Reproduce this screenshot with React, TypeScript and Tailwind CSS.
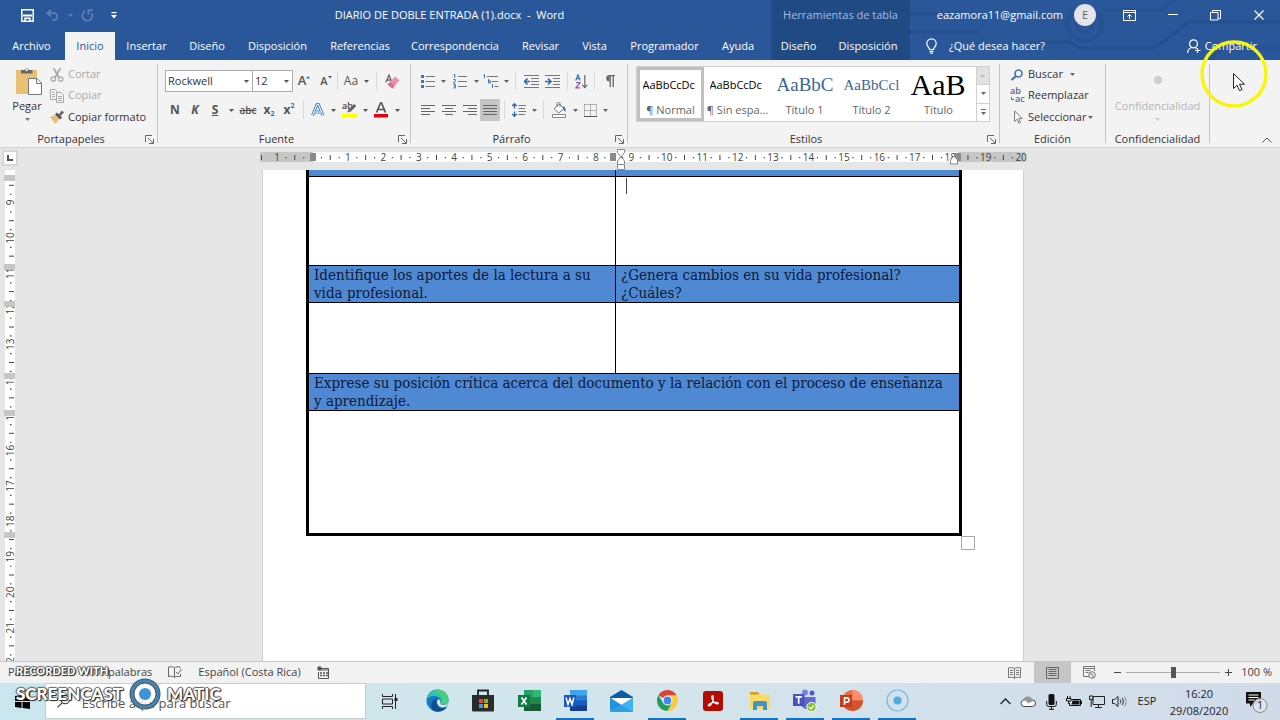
import React from "react";

interface Tab {
  label: string;
  width: string;
  active?: boolean;
}

const tabs: Tab[] = [
  { label: "Archivo", width: "w-[63px]" },
  { label: "Inicio", width: "w-[50px] ml-0.5", active: true },
  { label: "Insertar", width: "w-[63px]" },
  { label: "Diseño", width: "w-[58px]" },
  { label: "Disposición", width: "w-[83px]" },
  { label: "Referencias", width: "w-[82px]" },
  { label: "Correspondencia", width: "w-[108px]" },
  { label: "Revisar", width: "w-[63px]" },
  { label: "Vista", width: "w-[45px]" },
  { label: "Programador", width: "w-[95px]" },
  { label: "Ayuda", width: "w-[52px]" },
];

const UNIT = 35.43;

function Caret({ className = "w-2.5" }: { className?: string }) {
  return (
    <span className={`flex shrink-0 justify-center ${className}`}>
      <svg width="5" height="3" viewBox="0 0 5 3" fill="currentColor">
        <path d="M0 0h5L2.5 3z" />
      </svg>
    </span>
  );
}

function Tool({
  label,
  className = "w-5",
  children,
}: {
  label: string;
  className?: string;
  children: React.ReactNode;
}) {
  return (
    <button
      type="button"
      aria-label={label}
      className={`flex h-[22px] shrink-0 items-center justify-center ${className}`}
    >
      {children}
    </button>
  );
}

function Sep({ className = "mx-1" }: { className?: string }) {
  return <span className={`h-[18px] w-px shrink-0 bg-[#d8d8d8] ${className}`} />;
}

function Launcher() {
  return (
    <button type="button" aria-label="Más opciones" className="flex w-[15px] shrink-0 justify-center">
      <svg width="9" height="9" viewBox="0 0 9 9" fill="none" stroke="#666">
        <path d="M.5 7V.5H7M3 3l5 5M8.5 4v4.5H4" />
      </svg>
    </button>
  );
}

function Group({
  title,
  width,
  launcher = true,
  children,
}: {
  title: string;
  width: string;
  launcher?: boolean;
  children: React.ReactNode;
}) {
  return (
    <>
      <section className={`flex shrink-0 flex-col ${width}`}>
        <div className="h-[67px]">{children}</div>
        <div className="flex h-4 items-center">
          <h2 className="flex-1 text-center text-[11px] leading-4 text-[#333]">{title}</h2>
          {launcher && <Launcher />}
        </div>
      </section>
      <span className="h-[79px] w-px shrink-0 bg-[#c4c4c4]" />
    </>
  );
}

function Lines({ rows, width = 14 }: { rows: [number, number][]; width?: number }) {
  return (
    <svg
      width={width}
      height="12"
      viewBox={`0 0 ${width} 12`}
      stroke="#666"
      shapeRendering="crispEdges"
    >
      {rows.map(([x, w], i) => (
        <path key={i} d={`M${x} ${i * 3 + 1.5}h${w}`} />
      ))}
    </svg>
  );
}

function Header() {
  return (
    <header className="relative flex shrink-0 bg-[#2a579a] text-[11px] text-white">
      <svg
        className="pointer-events-none absolute top-0 right-0"
        width="400"
        height="60"
        viewBox="0 0 400 60"
        fill="none"
        stroke="#234e8e"
        strokeWidth="3"
      >
        <path d="M20 14h70M10 32h90M150 42h40l10 6h75l34-26h91" opacity=".8" />
        <circle cx="205" cy="24" r="17" opacity=".7" />
        <circle cx="205" cy="24" r="8" opacity=".5" />
        <path d="M222 10h60l12-10M330 60l14-12h56" opacity=".6" />
      </svg>

      <div className="flex w-[771px] shrink-0 flex-col">
        <div className="mb-0.5 flex h-[30px] items-center">
          <div className="flex items-center pl-4">
            <Tool label="Guardar" className="w-[22px]">
              <svg width="13" height="13" viewBox="0 0 13 13" fill="none" stroke="#fff" strokeWidth="1.5">
                <path d="M.8.8h11.4v11.4H.8z" />
                <path d="M2 6.5h9" strokeWidth="2" />
                <path d="M4 12V9.3h5V12" />
              </svg>
            </Tool>
            <Tool label="Deshacer" className="w-[28px]">
              <svg width="13" height="12" viewBox="0 0 13 12" fill="none" stroke="#5b80b8" strokeWidth="1.8">
                <path d="M5 .8L1.3 4.2 5 7.6M1.5 4.2H8a3.3 3.3 0 010 6.8H6.5" />
              </svg>
            </Tool>
            <Caret className="w-2 text-[#5b80b8]" />
            <Tool label="Rehacer" className="w-[26px]">
              <svg width="13" height="13" viewBox="0 0 13 13" fill="none" stroke="#5b80b8" strokeWidth="1.8">
                <path d="M4 2.3A5 5 0 1010.8 4.500M7.500 5.500V1.200h4.500" />
              </svg>
            </Tool>
            <Tool label="Personalizar barra" className="w-[28px]">
              <svg width="6" height="7" viewBox="0 0 6 7" fill="#fff">
                <path d="M.5 0h5v1.2h-5zM0 3h6L3 6.5z" />
              </svg>
            </Tool>
          </div>
          <h1 className="flex-1 text-center whitespace-pre">
            DIARIO DE DOBLE ENTRADA (1).docx  -  Word
          </h1>
        </div>
        <nav className="flex h-7">
          {tabs.map((tab) => (
            <button
              key={tab.label}
              type="button"
              className={`shrink-0 text-center whitespace-nowrap ${tab.width} ${
                tab.active ? "bg-[#f3f3f3] text-[#2a579a]" : ""
              }`}
            >
              {tab.label}
            </button>
          ))}
        </nav>
      </div>

      <div className="relative flex w-[139px] shrink-0 flex-col bg-[#204a84]">
        <p className="mb-0.5 flex h-[30px] items-center justify-center text-[#a3bce0]">
          Herramientas de tabla
        </p>
        <nav className="flex h-7">
          <button type="button" className="w-[55px]">Diseño</button>
          <button type="button" className="flex-1">Disposición</button>
        </nav>
      </div>

      <div className="relative flex flex-1 flex-col">
        <div className="mb-0.5 flex h-[30px] items-center justify-end">
          <span>eazamora11@gmail.com</span>
          <span className="mr-3 ml-[11px] flex size-[22px] items-center justify-center rounded-full bg-[#e4e4ea] text-[#666]">
            E
          </span>
          <Tool label="Opciones de cinta" className="w-[43px]">
            <svg width="13" height="11" viewBox="0 0 13 11" fill="none" stroke="#fff">
              <path d="M.5.5h12v10H.5zM.5 2.5h12M6.5 9V4.500M4.500 6.500l2-2 2 2" />
            </svg>
          </Tool>
          <Tool label="Minimizar" className="w-[43px]">
            <svg width="10" height="2" viewBox="0 0 10 2" stroke="#fff">
              <path d="M0 .5h10" />
            </svg>
          </Tool>
          <Tool label="Restaurar" className="w-[43px]">
            <svg width="11" height="11" viewBox="0 0 11 11" fill="none" stroke="#fff">
              <path d="M.5 2.5H8V10H.5zM2.5 2.5v-2h8v8h-2" />
            </svg>
          </Tool>
          <Tool label="Cerrar" className="w-[43px]">
            <svg width="10" height="10" viewBox="0 0 10 10" stroke="#fff" strokeWidth="1.2">
              <path d="M.5.5l9 9M9.5.5l-9 9" />
            </svg>
          </Tool>
        </div>
        <div className="flex h-7 items-center justify-between pr-[23px] pl-4">
          <button type="button" className="flex items-center gap-3">
            <svg width="11" height="16" viewBox="0 0 11 16" fill="none" stroke="#fff" strokeWidth="1.2">
              <path d="M3.5 11.5c0-2-2.7-3-2.7-6a4.7 4.7 0 019.4 0c0 3-2.700 4-2.700 6zM3.5 13.3h4M4 15.2h3" />
            </svg>
            ¿Qué desea hacer?
          </button>
          <button type="button" className="flex items-center gap-1">
            <svg width="14" height="15" viewBox="0 0 14 15" fill="none" stroke="#fff" strokeWidth="1.2">
              <circle cx="6.5" cy="4.8" r="4" />
              <path d="M.6 14c.2-3 2-5 4.4-5.5M8 8.5l1.5 1M10.5 9v5M8 11.5h5.5" />
            </svg>
            Compartir
          </button>
        </div>
      </div>
    </header>
  );
}

function Clipboard() {
  return (
    <Group title="Portapapeles" width="w-[157px]">
      <div className="flex text-[11px] text-[#333]">
        <button type="button" className="flex w-[50px] flex-col items-center pt-[3px] pl-1">
          <span className="pl-1">
            <svg width="28" height="29" viewBox="0 0 28 29">
              <path d="M1 3h21v24H1z" fill="#e9c174" />
              <path d="M6 6.5V3h3.500a2.500 2.500 0 014.500 0h3.500v3.500z" fill="#666" />
              <circle cx="11.7" cy="3" r="1.2" fill="#f3f3f3" />
              <path d="M13.5 11.5h8.500l4.500 4.500v11.500h-13z" fill="#fff" stroke="#777" />
              <path d="M21.5 11.5V16.500h5" fill="none" stroke="#777" />
            </svg>
          </span>
          <span className="mt-0.5 leading-4">Pegar</span>
          <Caret className="mt-1 w-2.5 text-[#777]" />
        </button>
        <div className="flex flex-col">
          <button type="button" disabled className="flex h-[21px] items-center gap-1 text-[#aaa]">
            <svg width="14" height="14" viewBox="0 0 14 14" fill="none" stroke="#aaa" strokeWidth="1.3">
              <path d="M3.5 0L9 9.500M10.500 0L5 9.500" strokeWidth="1.8" />
              <circle cx="3.3" cy="11" r="2.2" />
              <circle cx="10.7" cy="11" r="2.2" />
            </svg>
            Cortar
          </button>
          <button type="button" disabled className="flex h-[21px] items-center gap-1 text-[#aaa]">
            <svg width="14" height="14" viewBox="0 0 14 14" fill="#f3f3f3" stroke="#aaa">
              <path d="M.5.5H5l2.5 2.5v7.500h-7zM2 3.500h2M2 5.500h3M2 7.500h3" />
              <path d="M6.5 3.5H11L13.500 6v7.500h-7zM8 7.500h4M8 9.500h4M8 11.500h4" />
            </svg>
            Copiar
          </button>
          <button type="button" className="flex h-[22px] items-center gap-1">
            <svg width="14" height="14" viewBox="0 0 14 14">
              <path d="M0 7l5-2 4 4-3.5 5z" fill="#e9b970" />
              <path d="M5 4.500l2-2 5 5-2 2z" fill="#555" />
              <path d="M8.5 4.500L12 .5l2 2-3.800 3.800z" fill="#666" />
            </svg>
            Copiar formato
          </button>
        </div>
      </div>
    </Group>
  );
}

function Font() {
  return (
    <Group title="Fuente" width="w-[252px]">
      <div className="flex flex-col gap-[7px] pt-[6px] pl-[7px] text-[#555]">
        <div className="flex items-center">
          <label className="relative flex w-[88px] items-center">
            <select
              aria-label="Fuente"
              className="h-[22px] w-full appearance-none border border-[#ababab] bg-white pl-0.5 text-[11px] text-[#333]"
            >
              <option>Rockwell</option>
            </select>
            <span className="pointer-events-none absolute right-0.5">
              <Caret />
            </span>
          </label>
          <label className="relative -ml-px flex w-[41px] items-center">
            <select
              aria-label="Tamaño"
              className="h-[22px] w-full appearance-none border border-[#ababab] bg-white pl-0.5 text-[11px] text-[#333]"
            >
              <option>12</option>
            </select>
            <span className="pointer-events-none absolute right-0.5">
              <Caret />
            </span>
          </label>
          <Tool label="Aumentar fuente" className="w-[22px] text-[13px] font-semibold">
            A
            <svg width="4" height="10" viewBox="0 0 4 10" fill="#3a6ea8">
              <path d="M0 2.500h4L2 0z" />
            </svg>
          </Tool>
          <Tool label="Disminuir fuente" className="w-[22px] text-[11px] font-semibold">
            A
            <svg width="4" height="10" viewBox="0 0 4 10" fill="#555">
              <path d="M0 0h4L2 2.500z" />
            </svg>
          </Tool>
          <Sep className="mx-0" />
          <Tool label="Cambiar mayúsculas" className="w-[38px] text-xs">
            Aa
            <Caret className="ml-1 w-2" />
          </Tool>
          <Sep className="mx-0" />
          <Tool label="Borrar formato" className="w-[30px]">
            <svg width="15" height="15" viewBox="0 0 15 15">
              <path d="M.8 8.500L4 1l2.800 7M2 6h4" fill="none" stroke="#666" strokeWidth="1.3" />
              <path d="M2.500 10.500L10 2.500l4.500 3.700L7.500 14.500z" fill="#e793ab" />
              <path d="M2.500 10.500L5 8l4.700 4-2.200 2.500z" fill="#d96f90" />
            </svg>
          </Tool>
        </div>
        <div className="flex items-center">
          <Tool label="Negrita" className="w-5 text-xs font-bold">N</Tool>
          <Tool label="Cursiva" className="w-5 text-xs font-bold italic">K</Tool>
          <Tool label="Subrayado" className="w-5 text-xs font-bold underline">S</Tool>
          <Caret className="w-3" />
          <Tool label="Tachado" className="w-[22px] text-[10px] font-semibold line-through">abc</Tool>
          <Tool label="Subíndice" className="w-5 text-xs font-bold">
            x<span className="mt-2 text-[7px] text-[#3a6ea8]">2</span>
          </Tool>
          <Tool label="Superíndice" className="w-5 text-xs font-bold">
            x<span className="mb-2 text-[7px] text-[#3a6ea8]">2</span>
          </Tool>
          <Sep />
          <Tool label="Efectos de texto">
            <svg width="14" height="14" viewBox="0 0 14 14" fill="none" strokeLinejoin="round">
              <path d="M1.500 12.500L6 1.500h1.500L12 12.500M3.500 9h6.500" stroke="#4f86c6" strokeWidth="3" />
              <path d="M1.500 12.500L6 1.500h1.500L12 12.500M3.500 9h6.500" stroke="#fff" strokeWidth="1" />
            </svg>
          </Tool>
          <Caret />
          <Tool label="Resaltado" className="w-[22px]">
            <svg className="overflow-visible" width="17" height="16" viewBox="0 0 17 16">
              <text x="1" y="7" fontSize="9" fontWeight="600" fill="#444">ab</text>
              <path d="M6 10.500l1.500-3L13 2l2.300 2L10 9.500z" fill="#666" />
              <path d="M1 12h15v3.500H1z" fill="#ffff00" />
            </svg>
          </Tool>
          <Caret />
          <Tool label="Color de fuente" className="w-[22px]">
            <svg width="16" height="16" viewBox="0 0 16 16">
              <path d="M3.500 10.500L7.500 1h1l4 9.500M5 7.500h6" fill="none" stroke="#555" strokeWidth="1.7" />
              <path d="M1 12h14v3.500H1z" fill="#e3000f" />
            </svg>
          </Tool>
          <Caret />
        </div>
      </div>
    </Group>
  );
}

function Paragraph() {
  return (
    <Group title="Párrafo" width="w-[216px]">
      <div className="flex flex-col gap-[7px] pt-[6px] pl-[7px] text-[#666]">
        <div className="flex items-center">
          <Tool label="Viñetas">
            <svg width="14" height="15" viewBox="0 0 14 15">
              <path d="M4.500 2.500H14M4.500 7.500H14M4.500 12.500H14" stroke="#777" />
              <path d="M0 1h3v3H0zM0 6h3v3H0zM0 11h3v3H0z" fill="#3f72b0" />
            </svg>
          </Tool>
          <Caret />
          <Tool label="Numeración" className="w-6">
            <svg width="14" height="15" viewBox="0 0 14 15">
              <path d="M5 2.500h9M5 7.500h9M5 12.500h9" stroke="#777" />
              <path
                d="M.5 1L1.800.3v3.700M.3 5.500h2v1.500L.3 9h2.200M.3 10.500h2v1.700H1h1.300V14h-2"
                fill="none"
                stroke="#3f72b0"
              />
            </svg>
          </Tool>
          <Caret className="w-2" />
          <Tool label="Lista multinivel" className="w-[22px]">
            <svg width="16" height="15" viewBox="0 0 16 15" fill="none">
              <path d="M4 2.500h11M8.500 7.500H15M11.500 12.500h4" stroke="#777" />
              <path d="M.5 1l1-.7v4M5.500 5v4h1.800V6.800H5.500M9.500 10v4" stroke="#3f72b0" />
            </svg>
          </Tool>
          <Caret className="w-2" />
          <Sep className="mx-[5px]" />
          <Tool label="Disminuir sangría">
            <svg width="15" height="13" viewBox="0 0 15 13" fill="none">
              <path d="M0 .5h15M7 3.500h8M7 6.500h8M7 9.500h8M0 12.500h15" stroke="#777" />
              <path d="M6 6.500H1M3.500 3.500l-3 3 3 3" stroke="#2f68ad" strokeWidth="1.6" />
            </svg>
          </Tool>
          <Tool label="Aumentar sangría" className="w-[22px]">
            <svg width="15" height="13" viewBox="0 0 15 13" fill="none">
              <path d="M0 .5h15M8 3.500h7M8 6.500h7M8 9.500h7M0 12.500h15" stroke="#777" />
              <path d="M0 6.500h5.500M3 3.500l3 3-3 3" stroke="#2f68ad" strokeWidth="1.6" />
            </svg>
          </Tool>
          <Sep />
          <Tool label="Ordenar" className="w-[18px]">
            <svg width="13" height="15" viewBox="0 0 13 15" fill="none">
              <path d="M.7 6.500L3 .8l2.300 5.700M1.500 4.700h3" stroke="#3f72b0" strokeWidth="1.2" />
              <path d="M1 8.700h4l-4 5.100h4.200" stroke="#8a5ba6" strokeWidth="1.2" />
              <path d="M9.800 1v12.500M7.300 10.800l2.500 2.900 2.500-2.900" stroke="#666" strokeWidth="1.2" />
            </svg>
          </Tool>
          <Sep />
          <Tool label="Mostrar todo" className="w-[22px]">
            <svg width="10" height="12" viewBox="0 0 10 12">
              <path d="M4.500 0a3.200 3.200 0 000 6.500z" fill="#666" />
              <path d="M4 .6h6M5.200 0v12M8.200 0v12" stroke="#666" strokeWidth="1.3" />
            </svg>
          </Tool>
        </div>
        <div className="flex items-center">
          <Tool label="Alinear a la izquierda">
            <Lines rows={[[0, 14], [0, 9], [0, 14], [0, 9]]} />
          </Tool>
          <Tool label="Centrar" className="w-[22px]">
            <Lines rows={[[0, 14], [3, 8], [0, 14], [3, 8]]} />
          </Tool>
          <Tool label="Alinear a la derecha">
            <Lines rows={[[0, 14], [5, 9], [0, 14], [5, 9]]} />
          </Tool>
          <Tool label="Justificar" className="w-5 bg-[#c6c6c6]">
            <Lines rows={[[0, 14], [0, 14], [0, 14], [0, 14]]} />
          </Tool>
          <Sep />
          <Tool label="Espaciado entre líneas">
            <svg width="14" height="14" viewBox="0 0 14 14" fill="none">
              <path d="M6.500 2.500H14M6.500 5.500H13M6.500 8.500H14M6.500 11.500H13" stroke="#777" />
              <path
                d="M2.500 1v4.500M.3 3l2.200-2.300L4.700 3M2.500 8.500V13M.3 11l2.200 2.300L4.700 11"
                stroke="#2f68ad"
                strokeWidth="1.3"
              />
            </svg>
          </Tool>
          <Caret />
          <Sep />
          <Tool label="Sombreado" className="w-[22px]">
            <svg width="16" height="16" viewBox="0 0 16 16" fill="none">
              <path d="M3 6.500L8.500 2 13 7l-5.500 4z" fill="#fff" stroke="#777" />
              <path d="M6 5V1.500a1.500 1.500 0 013 0V5" stroke="#777" />
              <path d="M12 4c2.500 1 3 3.500 2.500 6-1-1-1.500-2-2.500-2.500z" fill="#3f72b0" />
              <path d="M1.500 12.500h13v3h-13z" fill="#fff" stroke="#888" />
            </svg>
          </Tool>
          <Caret />
          <Tool label="Bordes">
            <svg width="13" height="13" viewBox="0 0 13 13" fill="none" stroke="#777">
              <path d="M.5.5h12v12M.5.5v12M6.500.5v12M.5 6.500h12" strokeDasharray="1 1" />
              <path d="M0 12.500h13" stroke="#555" />
            </svg>
          </Tool>
          <Caret />
        </div>
      </div>
    </Group>
  );
}

const styles = [
  { name: "¶ Normal", sample: "AaBbCcDc", look: "text-[11px] text-black", active: true },
  { name: "¶ Sin espa...", sample: "AaBbCcDc", look: "text-[11px] text-black" },
  { name: "Título 1", sample: "AaBbC", look: "font-['Liberation_Serif',serif] text-[19px] text-[#3d6699]" },
  { name: "Título 2", sample: "AaBbCcl", look: "font-['Liberation_Serif',serif] text-[15px] text-[#3d6699]" },
  { name: "Título", sample: "AaB", look: "font-['Liberation_Serif',serif] text-[30px] leading-[24px] text-black" },
];

function Styles() {
  return (
    <Group title="Estilos" width="w-[371px]">
      <div className="pt-0.5 pl-2">
        <div className="flex h-[56px] w-[354px] border border-[#d0d0d0] bg-white">
          {styles.map((style) => (
            <button
              key={style.name}
              type="button"
              className={`flex w-[67px] shrink-0 flex-col items-center border-[3px] pt-0.5 ${
                style.active ? "border-[#c0c0c0]" : "border-transparent"
              }`}
            >
              <span
                className={`flex h-[26px] w-[56px] items-center overflow-hidden whitespace-nowrap ${style.look}`}
              >
                {style.sample}
              </span>
              <span className="mt-1 text-[11px] leading-4 whitespace-nowrap text-[#666]">
                {style.name}
              </span>
            </button>
          ))}
          <div className="ml-1 flex flex-1 flex-col border-l border-[#d0d0d0] text-[#666]">
            <button type="button" aria-label="Subir" className="flex-1 bg-[#e1e1e1] text-[#bbb]">
              <Caret className="w-full rotate-180" />
            </button>
            <button type="button" aria-label="Bajar" className="flex-1 border-y border-[#d0d0d0]">
              <Caret className="w-full" />
            </button>
            <button
              type="button"
              aria-label="Más estilos"
              className="flex flex-1 flex-col items-center justify-center gap-0.5"
            >
              <span className="h-px w-[5px] bg-[#666]" />
              <Caret />
            </button>
          </div>
        </div>
      </div>
    </Group>
  );
}

function Editing() {
  return (
    <Group title="Edición" width="w-[105px]" launcher={false}>
      <div className="flex flex-col pl-[10px] text-[11px] text-[#333]">
        <button type="button" className="flex h-[21px] items-center">
          <span className="w-[18px]">
            <svg width="14" height="12" viewBox="0 0 14 12" fill="none" stroke="#3f72b0">
              <circle cx="8.500" cy="4.500" r="3.500" strokeWidth="1.6" />
              <path d="M6 7L1.500 11" strokeWidth="2.2" />
            </svg>
          </span>
          Buscar
          <Caret className="ml-[5px] w-2.5 text-[#666]" />
        </button>
        <button type="button" className="flex h-[21px] items-center">
          <span className="w-[18px]">
            <svg className="overflow-visible" width="16" height="15" viewBox="0 0 16 15" fontSize="9" fontWeight="600">
              <text x="0" y="6" fill="#6a5a80">ab</text>
              <text x="5" y="14" fill="#3f72b0">ac</text>
              <path d="M1.500 9v2.500H4" fill="none" stroke="#3f72b0" />
            </svg>
          </span>
          Reemplazar
        </button>
        <button type="button" className="flex h-[22px] items-center">
          <span className="w-[18px] pl-1">
            <svg width="9" height="14" viewBox="0 0 9 14" fill="#fff" stroke="#777">
              <path d="M.6 1v10.500l2.500-2.300 1.800 4 1.600-.7-1.700-3.900h3.400z" />
            </svg>
          </span>
          Seleccionar
          <Caret className="w-2 text-[#666]" />
        </button>
      </div>
    </Group>
  );
}

function Ribbon() {
  return (
    <div className="flex shrink-0 border-b border-[#d2d2d2] bg-[#f3f3f3] pt-1">
      <Clipboard />
      <Font />
      <Paragraph />
      <Styles />
      <Editing />
      <Group title="Confidencialidad" width="w-[103px]" launcher={false}>
        <button
          type="button"
          disabled
          className="flex w-full flex-col items-center pt-3 text-[11px] text-[#b5b5b5]"
        >
          <span className="size-2 rounded-full bg-[#cfcfcf]" />
          <span className="mt-[14px] leading-4">Confidencialidad</span>
          <Caret className="mt-1 w-2.5 text-[#ccc]" />
        </button>
      </Group>
      <div className="flex flex-1 items-end justify-end pr-2 pb-1">
        <button type="button" aria-label="Contraer la cinta">
          <svg width="10" height="6" viewBox="0 0 10 6" fill="none" stroke="#555">
            <path d="M.5 5.500L5 1l4.500 4.500" />
          </svg>
        </button>
      </div>
    </div>
  );
}

function HorizontalRuler() {
  const zero = 50.5;
  const marks = Array.from({ length: 22 }, (_, i) => i - 1);
  return (
    <svg
      width="762"
      height="22"
      viewBox="0 0 762 22"
      className="overflow-visible"
      fontSize="10"
      fill="#444"
      textAnchor="middle"
    >
      <path d="M-2 4h765v10H-2z" fill="#c6c6c6" />
      <path d="M51 4h645v10H51z" fill="#fff" />
      {marks.map((n) => {
        const x = zero + n * UNIT;
        return (
          <g key={n}>
            {n !== 0 && (
              <text x={x} y="13">
                {Math.abs(n)}
              </text>
            )}
            {n < 20 && (
              <>
                <path d={`M${x + UNIT / 4 - 0.5} 9h1.200v1.200h-1.200z`} />
                <path d={`M${x + UNIT / 2 - 0.5} 7h1v5h-1z`} />
                <path d={`M${x + (UNIT * 3) / 4 - 0.5} 9h1.200v1.200h-1.200z`} />
              </>
            )}
          </g>
        );
      })}
      <path d="M-1 7h1v5h-1z" />
      <g fill="#8a8a8a">
        <path d="M48 5h6v8h-6zM348 5h6v8h-6zM692 5h7v8h-7z" />
      </g>
      <g fill="#fff" stroke="#888">
        <path d="M355.500 1.500h7v3l-3.500 4.500-3.500-4.500zM355.500 16.500v-3.500L359 9l3.500 4v3.500zM355.500 16.500h7v5h-7z" />
        <path d="M688.500 16v-4l3.500-4 3.500 4v4z" />
      </g>
    </svg>
  );
}

function VerticalRuler() {
  const cells = [6, 95, 132, 204, 241, 363];
  const marks = Array.from({ length: 14 }, (_, i) => i + 9);
  return (
    <svg
      width="15"
      height="491"
      viewBox="0 0 15 491"
      className="shrink-0"
      fontSize="10"
      fill="#444"
      textAnchor="middle"
    >
      <path d="M5 0h10v491H5z" fill="#fff" />
      {marks.map((n) => {
        const y = 32.5 + (n - 9) * UNIT;
        return (
          <g key={n}>
            <text transform={`translate(14 ${y}) rotate(-90)`}>{n}</text>
            <path d={`M10 ${y - UNIT / 4}h1.500v1.200H10z`} />
            <path d={`M9 ${y - UNIT / 2}h5v1H9z`} />
            <path d={`M10 ${y + UNIT / 4}h1.500v1.200H10z`} />
          </g>
        );
      })}
      {cells.map((y) => (
        <path key={y} d={`M4 ${y - 1}h11v6H4z`} fill="#c6c6c6" />
      ))}
    </svg>
  );
}

const headCell =
  "border-b border-black bg-[#5089d3] px-[5px] text-left align-top font-normal whitespace-nowrap text-[#0c1a38]";

function Page() {
  return (
    <div className="w-[762px] shrink-0 border-x border-[#cfcfcf] bg-white">
      <table className="ml-[43px] w-[656px] table-fixed border-separate border-spacing-0 border-x-[3px] border-b-[3px] border-black font-['DejaVu_Serif_Condensed','DejaVu_Serif',serif] text-[15px] leading-[18px]">
        <colgroup>
          <col className="w-[307px]" />
          <col />
        </colgroup>
        <tbody>
          <tr className="h-[7px]">
            <td className="border-r border-b border-black bg-[#5089d3] p-0" />
            <td className="border-b border-black bg-[#5089d3] p-0" />
          </tr>
          <tr className="h-[89px]">
            <td className="border-r border-b border-black" />
            <td className="border-b border-black px-[10px] py-px align-top">
              <span className="block h-4 w-px bg-[#444]" />
            </td>
          </tr>
          <tr className="h-[37px]">
            <th className={`border-r ${headCell}`}>
              Identifique los aportes de la lectura a su
              <br />
              vida profesional.
            </th>
            <th className={headCell}>
              ¿Genera cambios en su vida profesional?
              <br />
              ¿Cuáles?
            </th>
          </tr>
          <tr className="h-[71px]">
            <td className="border-r border-b border-black" />
            <td className="border-b border-black" />
          </tr>
          <tr className="h-[37px]">
            <th colSpan={2} className={headCell}>
              Exprese su posición crítica acerca del documento y la relación con el proceso de enseñanza
              <br />
              y aprendizaje.
            </th>
          </tr>
          <tr className="h-[122px]">
            <td colSpan={2} />
          </tr>
        </tbody>
      </table>
      <div className="ml-[698px] size-[14px] border border-[#aaa] bg-white" />
    </div>
  );
}

function StatusBar() {
  return (
    <footer className="flex h-[22px] shrink-0 items-center border-t border-[#c6c6c6] bg-[#f2f2f2] text-[11px] text-[#444]">
      <span className="w-[108px] pl-2">Pá</span>
      <span>palabras</span>
      <button type="button" aria-label="Revisión" className="ml-4">
        <svg width="14" height="13" viewBox="0 0 14 13" fill="none" stroke="#666">
          <path d="M6.500 2C5 .5 3 .5.5 1v9.500c2.500-.5 4.500-.5 6 1zM6.500 2C8 .8 9.500.5 12 1v1M6.500 11.500c1-1 3-1.300 6-1V8M8 6l2 2 3.500-5" />
        </svg>
      </button>
      <span className="ml-4">Español (Costa Rica)</span>
      <button type="button" aria-label="Macros" className="ml-4">
        <svg width="12" height="13" viewBox="0 0 12 13" fill="none" stroke="#555">
          <path d="M4 2.500h7.500v10h-10V6M4 4h7" />
          <path d="M3 7h2M6 7h2M9 7h2M3 9.500h2M6 9.500h2M9 9.500h2" strokeWidth="1.5" />
          <circle cx="2.500" cy="2.500" r="2.300" fill="#555" stroke="none" />
        </svg>
      </button>
      <div className="ml-auto flex h-full items-center">
        <Tool label="Modo de lectura" className="w-10">
          <svg width="13" height="12" viewBox="0 0 13 12" fill="none" stroke="#777">
            <path d="M6.500 1.500C5 .5 3 .5.500.8v9.700c2-.3 4.500-.3 6 .7 1.500-1 4-1 6-.7V.8c-2.500-.3-4.500-.3-6 .7v9.700M2 3.500h3M2 5.500h3M2 7.500h3M8 3.500h3M8 5.500h3M8 7.500h3" />
          </svg>
        </Tool>
        <Tool label="Diseño de impresión" className="h-full w-[37px] bg-[#c6c6c6]">
          <svg width="13" height="12" viewBox="0 0 13 12" fill="none" stroke="#666">
            <path d="M.5.5h12v11H.5zM2.500 2.500h8M2.500 4.500h8M2.500 6.500h8M2.500 8.500h8" />
          </svg>
        </Tool>
        <Tool label="Diseño web" className="w-[37px]">
          <svg width="13" height="13" viewBox="0 0 13 13" fill="none" stroke="#777">
            <path d="M6 10.500H.5V.5h11V5M.5 2.500h11M2.500 4.500h5M2.500 6.500h3" />
            <circle cx="9" cy="9" r="3.300" />
            <path d="M7 8h2l1 2v2" />
          </svg>
        </Tool>
        <Tool label="Alejar" className="w-[18px]">
          <svg width="7" height="2" viewBox="0 0 7 2" stroke="#444">
            <path d="M0 .5h7" />
          </svg>
        </Tool>
        <input
          type="range"
          aria-label="Zoom"
          min="10"
          max="190"
          defaultValue="100"
          className="h-4 w-[94px] appearance-none bg-[linear-gradient(#aaa,#aaa)] bg-[length:100%_1px] bg-center bg-no-repeat [&::-webkit-slider-thumb]:h-[11px] [&::-webkit-slider-thumb]:w-[5px] [&::-webkit-slider-thumb]:appearance-none [&::-webkit-slider-thumb]:bg-[#555]"
        />
        <Tool label="Acercar" className="w-4">
          <svg width="7" height="7" viewBox="0 0 7 7" stroke="#444">
            <path d="M0 3.500h7M3.500 0v7" />
          </svg>
        </Tool>
        <span className="w-11 pr-2 text-right whitespace-nowrap">100 %</span>
      </div>
    </footer>
  );
}

const apps = [
  {
    name: "Edge",
    icon: (
      <svg width="23" height="23" viewBox="0 0 23 23">
        <circle cx="11.500" cy="11.500" r="11" fill="#1778c4" />
        <path d="M.6 10C1.500 4 6 .5 11.500.5S22.500 5 22.500 10.500c0 3-2.300 5-5 5-2 0-3.500-.6-3.300-1.600.9-1 1.100-2 .6-3.200C14 8.500 11 7 8 7 5 7 2 8 .6 10z" fill="#35c1b0" />
        <path d="M12 .5c6 .2 10.500 4.500 10.500 10 0 3-2.300 5-5 5-2 0-3.500-.6-3.300-1.600 3-2 2-9-5-12z" fill="#57d36e" opacity=".7" />
        <path d="M7.500 22C3 17 6 10 11.500 9.500c-2.500 3-.5 8.500 4 9.500 2 .4 4 0 5.500-1-2.500 4-8.500 6-13.500 4z" fill="#0d4d92" />
        <path d="M14.200 13.900c-.3 1.300 1.300 2 3.300 2 2 0 4-1 5-3-.2 2.500-2.500 5.500-6 5.500-4 0-6.500-4-5-7.500 1.500-1 3.500.5 2.700 3z" fill="#d5e7ef" />
      </svg>
    ),
  },
  {
    name: "Store",
    icon: (
      <svg width="22" height="23" viewBox="0 0 22 23">
        <path d="M6 7V1.500h10V7" fill="none" stroke="#222" strokeWidth="1.8" />
        <path d="M0 6h22v15.500a1 1 0 01-1 1H1a1 1 0 01-1-1z" fill="#2b2b2b" />
        <path d="M7 10h4v4H7z" fill="#e84f2a" />
        <path d="M12 10h4v4h-4z" fill="#7eb928" />
        <path d="M7 15h4v4H7z" fill="#2da3e0" />
        <path d="M12 15h4v4h-4z" fill="#f7b71d" />
      </svg>
    ),
  },
  {
    name: "Excel",
    icon: (
      <svg width="23" height="21" viewBox="0 0 23 21">
        <path d="M6 0h17v21H6z" fill="#1c8a4c" />
        <path d="M14.500 0H23v7h-8.500z" fill="#33b877" />
        <path d="M6 0h8.500v7H6z" fill="#21a366" />
        <path d="M6 14h17v7H6z" fill="#155c36" />
        <path d="M0 5h12v12H0z" fill="#107c41" />
        <path d="M3.500 7.500l5 7M8.500 7.500l-5 7" stroke="#fff" strokeWidth="1.8" />
      </svg>
    ),
  },
  {
    name: "Word",
    open: true,
    icon: (
      <svg width="23" height="21" viewBox="0 0 23 21">
        <path d="M6 0h17v6H6z" fill="#41a5ee" />
        <path d="M6 5.500h17V11H6z" fill="#2b7cd3" />
        <path d="M6 10.500h17V16H6z" fill="#185abd" />
        <path d="M6 15.500h17V21H6z" fill="#103f91" />
        <path d="M0 5h12v12H0z" fill="#185abd" />
        <path d="M2 7.500l2 7 2-6 2 6 2-7" fill="none" stroke="#fff" strokeWidth="1.5" />
      </svg>
    ),
  },
  {
    name: "Correo",
    icon: (
      <svg width="23" height="22" viewBox="0 0 23 22">
        <path d="M0 7l11.500-7L23 7v6H0z" fill="#0a5ea8" />
        <path d="M1 8h21l-4 8H5z" fill="#fff" />
        <path d="M0 7.500l14 9-14 5z" fill="#2493df" />
        <path d="M23 7.500V22H0z" fill="#3fb3f2" />
        <path d="M0 22l11-7 12 7z" fill="#1f8bd8" opacity=".5" />
      </svg>
    ),
  },
  {
    name: "Chrome",
    open: true,
    icon: (
      <svg width="21" height="21" viewBox="0 0 21 21">
        <path d="M10.500 10.500L1.400 5.250A10.500 10.500 0 0119.600 5.250z" fill="#db4437" />
        <path d="M10.500 5.250h9.100A10.500 10.500 0 0110.300 21l4.700-8z" fill="#f8cc3e" />
        <path d="M1.400 5.250A10.500 10.500 0 0010.300 21l4.600-8-4.400 2.300-4.300-2.500z" fill="#1fa15d" />
        <circle cx="10.500" cy="10.500" r="5" fill="#fff" />
        <circle cx="10.500" cy="10.500" r="3.900" fill="#4285f4" />
      </svg>
    ),
  },
  {
    name: "Acrobat",
    icon: (
      <svg width="20" height="20" viewBox="0 0 20 20">
        <rect width="20" height="20" rx="3" fill="#b30b00" />
        <path
          d="M10 10.500C8.500 7 8.500 4.500 9.500 4.500s1 3 .3 6c-1 2.300-3 4.800-4.300 4.300-1-1 2-3 4.500-3.300 2.500-.3 5.500-.3 5.300.9-.3 1.200-3.500 0-5.300-1.900z"
          fill="none"
          stroke="#fff"
          strokeWidth="1.2"
        />
      </svg>
    ),
  },
  {
    name: "Explorador",
    open: true,
    icon: (
      <svg width="21" height="18" viewBox="0 0 21 18">
        <path d="M1 0h8l2 3H1z" fill="#d79a1d" />
        <path d="M1 2.500h19a1 1 0 011 1V17H1z" fill="#fbd965" />
        <path d="M4 18V11a2 2 0 012-2h10a2 2 0 012 2v7h-4v-4H8v4z" fill="#3f95c9" />
      </svg>
    ),
  },
  {
    name: "Teams",
    open: true,
    icon: (
      <svg width="24" height="23" viewBox="0 0 24 23">
        <circle cx="12" cy="3.500" r="3" fill="#7b83eb" />
        <circle cx="19" cy="4" r="2.500" fill="#5059c9" />
        <path d="M8 8h14.500v6a5 5 0 01-4 5c-5 3-10 0-10.500-4z" fill="#6269d3" />
        <path d="M0 5h11.500v12H0z" fill="#4b53bc" />
        <path d="M2.500 7.800h6.500M5.700 7.800v7" stroke="#fff" strokeWidth="1.7" />
        <circle cx="18.500" cy="18" r="4.700" fill="#8bbf2c" stroke="#fff" />
        <path d="M16 18l2 2 3-3.500" fill="none" stroke="#fff" strokeWidth="1.3" />
      </svg>
    ),
  },
  {
    name: "PowerPoint",
    open: true,
    icon: (
      <svg width="23" height="21" viewBox="0 0 23 21">
        <circle cx="12.500" cy="10.500" r="10.500" fill="#ed6c47" />
        <path d="M12.500 0A10.500 10.500 0 0123 10.500H12.500z" fill="#ff8f6b" />
        <path d="M2 10.500h21a10.500 10.500 0 01-21 0z" fill="#d35230" />
        <path d="M0 5h12v12H0z" fill="#c43e1c" />
        <path d="M4.500 14.800V7.900h2.300a2.200 2.200 0 010 4.400H4.500" fill="none" stroke="#fff" strokeWidth="1.6" />
      </svg>
    ),
  },
  {
    name: "Grabador",
    open: true,
    icon: (
      <svg width="23" height="23" viewBox="0 0 23 23">
        <circle cx="11.500" cy="11.500" r="10.500" fill="none" stroke="#7ab8de" strokeWidth="1.2" />
        <circle cx="11.500" cy="11.500" r="4" fill="#55aae2" />
      </svg>
    ),
  },
];

function Tray() {
  return (
    <div className="ml-auto flex items-center text-[#222]">
      <Tool label="Iconos ocultos" className="w-[22px]">
        <svg width="11" height="7" viewBox="0 0 11 7" fill="none" stroke="#222" strokeWidth="1.3">
          <path d="M.5 6L5.500 1l5 5" />
        </svg>
      </Tool>
      <Tool label="OneDrive" className="w-6">
        <svg width="16" height="11" viewBox="0 0 16 11" fill="#fff" stroke="#444">
          <path d="M4 10.500a3.300 3.300 0 01-.3-6.500 4.500 4.500 0 018.300 0 3.200 3.200 0 01.5 6.500z" />
          <path d="M3.500 4.500c2 0 3.500 1 4.500 3l5-2.500C12 1 8-1 5 1.500z" fill="#999" stroke="none" />
        </svg>
      </Tool>
      <Tool label="Micrófono" className="w-[22px]">
        <svg width="11" height="16" viewBox="0 0 11 16">
          <rect x="2.500" width="6" height="11" rx="1.500" fill="#111" />
          <path d="M.7 7v3.500a2 2 0 002 2h5.600a2 2 0 002-2V7M5.500 12v3M3 15.300h5" fill="none" stroke="#111" />
        </svg>
      </Tool>
      <Tool label="Batería" className="w-6">
        <svg width="16" height="11" viewBox="0 0 16 11">
          <path d="M5.500 3.500h9v6h-11V7" fill="none" stroke="#111" />
          <path d="M6.500 4.500h7v4h-8zM15 5h1v3h-1z" fill="#111" />
          <path d="M1.500 0v2.500M4 0v2.500M.5 2.500H5V5H.5zM2.700 5v3" fill="none" stroke="#111" />
        </svg>
      </Tool>
      <Tool label="Red" className="w-[22px]">
        <svg width="16" height="13" viewBox="0 0 16 13" fill="none" stroke="#222">
          <path d="M4 1.500h11.500v8H4zM9.500 9.500v3M6 12.500h7M.5 1h3.500v3.500H.5zM2.200 4.500v7.500" />
        </svg>
      </Tool>
      <Tool label="Volumen" className="w-[22px]">
        <svg width="15" height="13" viewBox="0 0 15 13" fill="none" stroke="#222">
          <path d="M.5 4.500h2L6 1.500v10L2.500 8.500h-2zM8 4.500c1 1 1 3 0 4M10 3c1.800 2 1.800 5 0 7" />
          <path d="M12.300 1.500c2.300 3 2.300 7 0 10" stroke="#888" />
        </svg>
      </Tool>
      <button type="button" className="w-[34px] text-[11px]">ESP</button>
      <button type="button" className="w-[70px] text-center text-[11px] leading-[17px]">
        16:20
        <br />
        29/08/2020
      </button>
      <Tool label="Notificaciones" className="mr-3 w-[34px] justify-end">
        <svg width="23" height="23" viewBox="0 0 23 23">
          <path d="M1 2h15v11.500H8L5 17v-3.500H1z" fill="#111" />
          <path d="M3.500 5h10M3.500 7.500h10M3.500 10h6" stroke="#fff" />
          <circle cx="15" cy="15.500" r="7" fill="#dde3ea" fillOpacity=".9" stroke="#888" />
          <text x="15" y="19" fontSize="10" textAnchor="middle" fill="#222">1</text>
        </svg>
      </Tool>
    </div>
  );
}

function Taskbar() {
  return (
    <div className="flex h-[37px] shrink-0 bg-linear-to-r from-[#c9e6ee] via-[#d4e5ec] to-[#d0dbea]">
      <button type="button" aria-label="Inicio" className="flex w-[45px] items-center justify-center">
        <svg width="15" height="15" viewBox="0 0 15 15" fill="#000">
          <path d="M0 2l6.500-1v6H0zM7.500.9L15 0v7H7.500zM0 8h6.500v6L0 13zM7.500 8H15v7l-7.500-1z" />
        </svg>
      </button>
      <label className="flex h-9 w-[321px] items-center border border-[#c3ccd0] bg-white pl-[11px]">
        <svg width="15" height="15" viewBox="0 0 15 15" fill="none" stroke="#333" strokeWidth="1.2">
          <circle cx="9" cy="5.500" r="4.500" />
          <path d="M5.500 9L.5 14" />
        </svg>
        <input
          type="text"
          aria-label="Buscar"
          placeholder="Escribe aquí para buscar"
          className="ml-[11px] h-full w-full pt-1 text-[13px] placeholder-[#555] outline-none"
        />
      </label>
      <Tool label="Vista de tareas" className="h-full w-12">
        <svg width="16" height="15" viewBox="0 0 16 15" fill="none" stroke="#222">
          <path d="M.5 0v2.500h10V0M.5 15v-2.500h10V15M.5 5h10v5H.5zM13.500 0v15" />
          <path d="M12.500 4h3v3h-3z" fill="#222" stroke="none" />
        </svg>
      </Tool>
      {apps.map((app) => (
        <button
          key={app.name}
          type="button"
          aria-label={app.name}
          className="flex w-[46px] flex-col items-center"
        >
          <span className="flex h-[35px] items-center">{app.icon}</span>
          {app.open && <span className="h-0.5 w-[38px] bg-[#1173c5]" />}
        </button>
      ))}
      <Tray />
    </div>
  );
}

function Watermark() {
  return (
    <div className="pointer-events-none absolute bottom-2.5 left-4 flex flex-col font-['Lato',sans-serif] font-black text-white [text-shadow:1px_1px_1px_#222,-1px_0_1px_#555,0_-1px_1px_#666,1px_0_1px_#333]">
      <span className="text-[11px] leading-[14px]">RECORDED WITH</span>
      <span className="flex h-8 items-center text-[17px]">
        SCREENCAST
        <svg className="mx-1.5" width="32" height="32" viewBox="0 0 32 32">
          <circle cx="16" cy="16" r="13" fill="#fff" fillOpacity=".8" stroke="#555" strokeWidth="5" />
          <circle cx="16" cy="16" r="13" fill="none" stroke="#3f86bd" strokeWidth="3" />
          <circle cx="16" cy="16" r="6" fill="#3c93d6" />
        </svg>
        MATIC
      </span>
    </div>
  );
}

function Pointer() {
  return (
    <svg
      className="pointer-events-none absolute top-[38px] right-[10px]"
      width="72"
      height="72"
      viewBox="0 0 72 72"
      fill="none"
    >
      <circle cx="36" cy="36" r="32" stroke="#f6f60c" strokeWidth="3.5" />
      <path d="M35.500 35.500v15l3.500-3.300 2.500 5.500 2.500-1.200-2.500-5.300h5z" fill="#fff" stroke="#222" />
    </svg>
  );
}

function App() {
  return (
    <div className="relative flex h-screen flex-col overflow-hidden bg-[#e6e6e6] font-['Open_Sans','Noto_Sans',sans-serif]">
      <Header />
      <Ribbon />
      <div className="flex h-[22px] shrink-0 pr-[9px]">
        <div className="w-[15px] shrink-0 pt-0.5 pl-0.5">
          <button
            type="button"
            aria-label="Tabulación"
            className="flex size-4 items-center justify-center border-2 border-[#d6d6d6] bg-white"
          >
            <svg width="6" height="6" viewBox="0 0 6 6" fill="none" stroke="#555" strokeWidth="2">
              <path d="M1 0v5h5" />
            </svg>
          </button>
        </div>
        <div className="flex flex-1 justify-center">
          <HorizontalRuler />
        </div>
      </div>
      <main className="flex min-h-0 flex-1 overflow-hidden pr-[9px]">
        <VerticalRuler />
        <div className="flex flex-1 justify-center">
          <Page />
        </div>
      </main>
      <StatusBar />
      <Taskbar />
      <Watermark />
      <Pointer />
    </div>
  );
}

export default App;
